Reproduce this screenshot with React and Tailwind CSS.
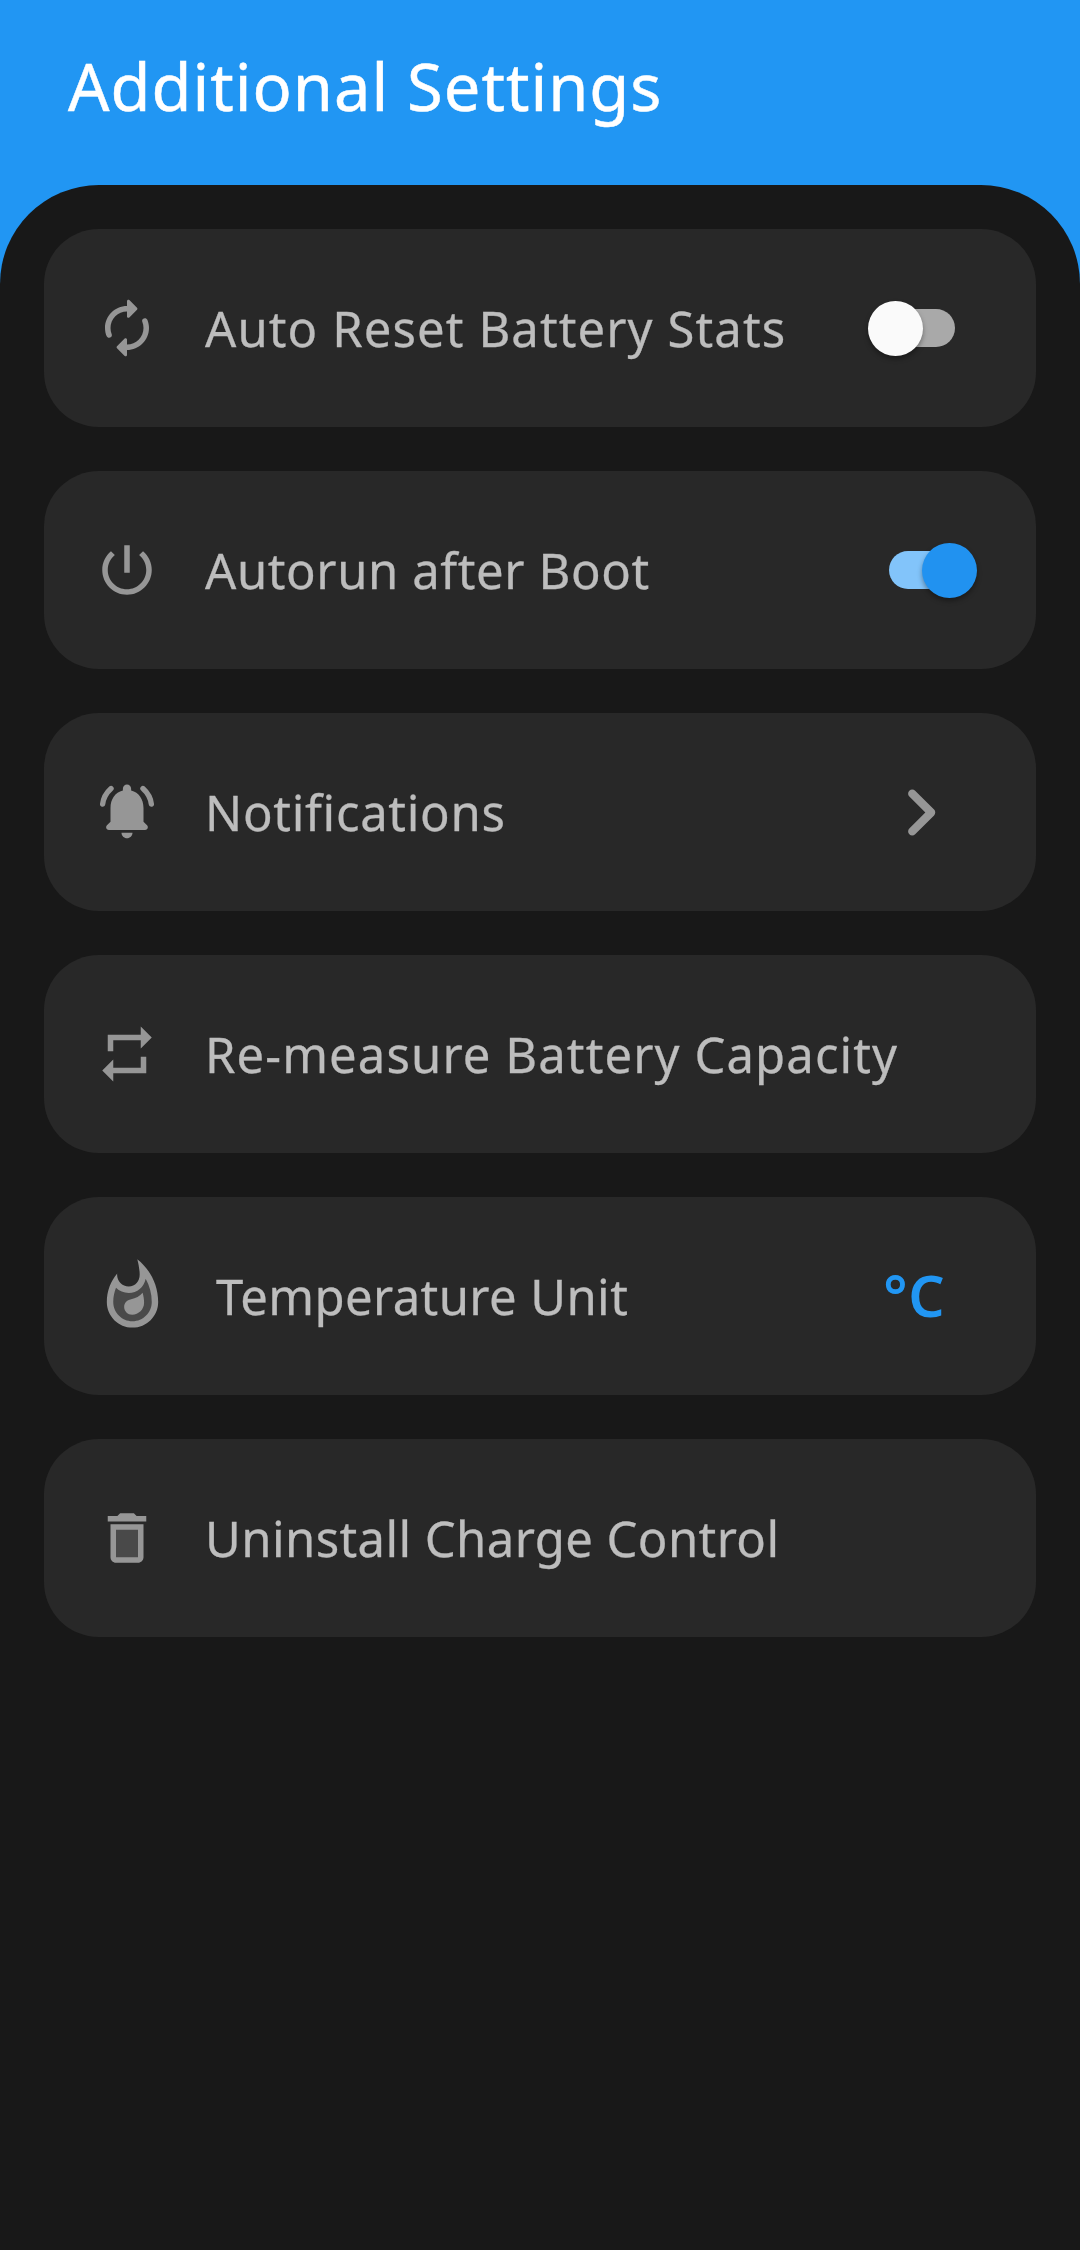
import React, { useState } from "react";

const icons = {
    autorenew: (
        <path d="M12 6v1.79c0 .45.54.67.85.35l2.79-2.79c.2-.2.2-.51 0-.71l-2.79-2.79c-.31-.31-.85-.09-.85.36V4c-4.42 0-8 3.58-8 8 0 1.04.2 2.04.57 2.95.27.67 1.13.85 1.64.34.27-.27.38-.68.23-1.04C6.15 13.56 6 12.79 6 12c0-3.31 2.69-6 6-6zm5.79 2.71c-.27.27-.38.69-.23 1.04.28.7.44 1.46.44 2.25 0 3.31-2.69 6-6 6v-1.79c0-.45-.54-.67-.85-.35l-2.79 2.79c-.2.2-.2.51 0 .71l2.79 2.79c.31.31.85.09.85-.35V20c4.42 0 8-3.58 8-8 0-1.04-.2-2.04-.57-2.95-.27-.67-1.13-.85-1.64-.34z" />
    ),
    power: (
        <path d="M13 3h-2v10h2V3zm4.83 2.17l-1.42 1.42C17.99 7.86 19 9.81 19 12c0 3.87-3.13 7-7 7s-7-3.13-7-7c0-2.19 1.01-4.14 2.58-5.42L6.17 5.17C4.23 6.82 3 9.26 3 12c0 4.97 4.03 9 9 9s9-4.03 9-9c0-2.74-1.23-5.18-3.17-6.83z" />
    ),
    bell: (
        <>
            <path d="M12 21.5c1.1 0 2-.9 2-2h-4c0 1.1.9 2 2 2zm6-6v-5c0-3.07-1.64-5.64-4.5-6.32V3.5c0-.83-.67-1.5-1.5-1.5s-1.5.67-1.5 1.5v.68C7.63 4.86 6 7.42 6 10.5v5l-1.29 1.29c-.63.63-.19 1.71.7 1.71h13.17c.89 0 1.34-1.08.71-1.71L18 15.5z" />
            <path
                d="M6.2 3.45C4.5 5 3.4 6.9 3.15 9.1M17.8 3.45c1.7 1.55 2.8 3.45 3.05 5.65"
                fill="none"
                stroke="currentColor"
                strokeWidth="1.95"
                strokeLinecap="round"
            />
        </>
    ),
    repeat: <path d="M7 7h10v3l4-4-4-4v3H5v6h2V7zm10 10H7v-3l-4 4 4 4v-3h12v-6h-2v4z" />,
    flame: (
        <>
            <path d="M13.5.67s.74 2.65.74 4.8c0 2.06-1.35 3.73-3.41 3.73-2.07 0-3.63-1.67-3.63-3.73l.03-.36C5.21 7.51 4 10.62 4 14c0 4.42 3.58 8 8 8s8-3.58 8-8C20 8.61 17.41 3.8 13.5.67z" />
            <path
                className="fill-[#494949]"
                fillRule="evenodd"
                d="M16.11 6.77c-.53 2.6-2.62 4.43-5.28 4.43-1.56 0-2.96-.62-3.97-1.63C6.3 10.96 6 12.47 6 14c0 3.31 2.69 6 6 6s6-2.69 6-6c0-2.56-.66-5.03-1.89-7.23zm-4.22 11.22c-1.37 0-2.49-1.08-2.49-2.42 0-1.25.81-2.13 2.17-2.41 1.37-.28 2.79-.93 3.58-1.99.3 1 .46 2.05.46 3.12 0 2.04-1.66 3.7-3.72 3.7z"
            />
        </>
    ),
    trash: (
        <>
            <path d="M6 19c0 1.1.9 2 2 2h8c1.1 0 2-.9 2-2V7H6v12zM19 4h-3.5l-1-1h-5l-1 1H5v2h14V4z" />
            <path className="fill-[#494949]" d="M8 9h8v10H8z" />
        </>
    ),
};

function Switch({ checked, onChange }) {
    return (
        <button
            role="switch"
            aria-checked={checked}
            onClick={() => onChange(!checked)}
            className={`flex h-[56px] w-[88px] items-center ${checked ? "justify-start" : "justify-end"}`}
        >
            <span
                className={`flex h-[38px] w-[80px] items-center rounded-full ${checked ? "justify-end bg-[#82c4fa]" : "justify-start bg-[#a9a9a9]"}`}
            >
                <span
                    className={`size-[55px] shrink-0 rounded-full shadow-[0_3px_5px_rgba(0,0,0,0.35)] ${checked ? "-mr-2 bg-[#2192f0]" : "-ml-[7px] bg-[#fafafa]"}`}
                />
            </span>
        </button>
    );
}

function SettingRow({ icon, label, tracking, large, children }) {
    return (
        <div className="flex h-[198px] items-center rounded-[55px] bg-[#282828] pl-[50px]">
            <svg
                viewBox="0 0 24 24"
                className={`shrink-0 fill-current text-[#969696] ${large ? "mb-[2px] size-[77px]" : "size-[66px]"}`}
            >
                {icons[icon]}
            </svg>
            <span
                className={`ml-[45px] flex-1 whitespace-nowrap text-[49px] leading-[66px] text-[#bdbdbd] [-webkit-text-stroke:0.3px_#bdbdbd] ${tracking}`}
            >
                {label}
            </span>
            {children}
        </div>
    );
}

function App() {
    const [autoReset, setAutoReset] = useState(false);
    const [autorun, setAutorun] = useState(true);
    const [unit, setUnit] = useState("C");

    return (
        <div className="min-h-screen bg-[#2196f3] font-['Noto_Sans',sans-serif]">
            <header className="flex h-[185px] items-center pl-[68px]">
                <h1 className="pb-[13px] text-[65px] leading-[90px] tracking-[1px] text-white [-webkit-text-stroke:0.5px_white]">
                    Additional Settings
                </h1>
            </header>
            <main className="flex min-h-[2065px] flex-col gap-[44px] rounded-t-[99px] bg-[#181818] px-[44px] pt-[44px]">
                <SettingRow icon="autorenew" label="Auto Reset Battery Stats" tracking="tracking-[1.1px]">
                    <div className="mr-[81px]">
                        <Switch checked={autoReset} onChange={setAutoReset} />
                    </div>
                </SettingRow>
                <SettingRow icon="power" label="Autorun after Boot" tracking="tracking-[0.6px]">
                    <div className="mr-[59px]">
                        <Switch checked={autorun} onChange={setAutorun} />
                    </div>
                </SettingRow>
                <SettingRow icon="bell" label="Notifications" tracking="tracking-[0.7px]">
                    <svg viewBox="0 0 24 24" className="mr-[66px] size-[99px] fill-[#969696]">
                        <path d="M9.29 15.88L13.17 12 9.29 8.12c-.39-.39-.39-1.02 0-1.41.39-.39 1.02-.39 1.41 0l4.59 4.59c.39.39.39 1.02 0 1.41L10.7 17.3c-.39.39-1.02.39-1.41 0-.38-.39-.39-1.03 0-1.42z" />
                    </svg>
                </SettingRow>
                <SettingRow icon="repeat" label="Re-measure Battery Capacity" tracking="tracking-[1.1px]" />
                <SettingRow icon="flame" label="Temperature Unit" tracking="tracking-[0.4px]" large>
                    <button
                        onClick={() => setUnit(unit === "C" ? "F" : "C")}
                        className="mr-[91px] pb-[3px] text-[57px] leading-[70px] font-semibold tracking-[0.5px] text-[#2196f3]"
                    >
                        °{unit}
                    </button>
                </SettingRow>
                <SettingRow icon="trash" label="Uninstall Charge Control" tracking="tracking-[0.4px]" />
            </main>
        </div>
    );
}

export default App;
